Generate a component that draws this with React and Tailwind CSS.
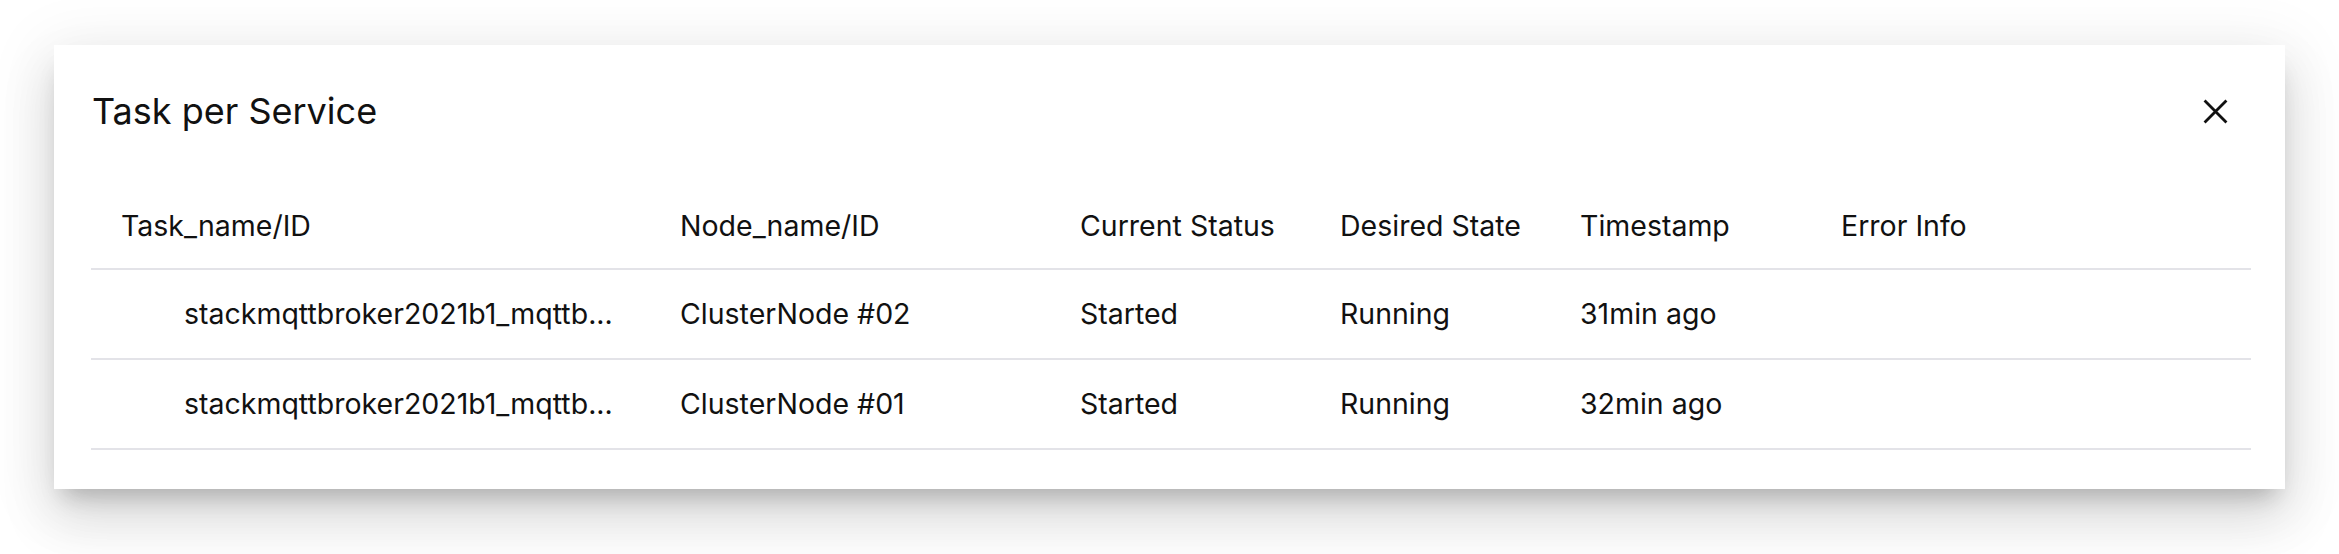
import React from "react";

const rows = [
  { task: "stackmqttbroker2021b1_mqttb...", node: "ClusterNode #02", status: "Started", desired: "Running", time: "31min ago", error: "" },
  { task: "stackmqttbroker2021b1_mqttb...", node: "ClusterNode #01", status: "Started", desired: "Running", time: "32min ago", error: "" },
];

const cols = "grid grid-cols-[559px_400px_260px_240px_261px_1fr]";

export default function App() {
  return (
    <div className="min-h-[554px] w-[2339px] bg-white pt-[45px] pl-[54px] font-['Inter',sans-serif] text-[#111111]">
      <div className="w-[2231px] h-[444px] bg-white shadow-[0_16px_22px_-10px_rgba(0,0,0,0.22),0_30px_50px_4px_rgba(0,0,0,0.10),0_10px_60px_10px_rgba(0,0,0,0.07)] pt-[36px] pl-[37px] pr-[34px]">
        <div className="flex items-center justify-between h-[60px]">
          <h2 className="pl-[1px] text-[36px] leading-none font-normal">Task per Service</h2>
          <button className="mr-[16px] flex items-center justify-center w-[40px] h-[40px]">
            <svg width="25" height="25" viewBox="0 0 24 24" fill="none" stroke="#111111" strokeWidth="2.7" strokeLinecap="butt">
              <path d="M1.5 1.5 L22.5 22.5 M22.5 1.5 L1.5 22.5" />
            </svg>
          </button>
        </div>
        <div className="mt-[39px] text-[28.5px] leading-none">
          <div className={`${cols} h-[90px] items-center pt-[5px] border-b-2 border-[#e3e3e8]`}>
            <div className="pl-[30px]">Task_name/ID</div>
            <div className="pl-[30px]">Node_name/ID</div>
            <div className="pl-[30px]">Current Status</div>
            <div className="pl-[30px]">Desired State</div>
            <div className="pl-[30px]">Timestamp</div>
            <div className="pl-[30px]">Error Info</div>
          </div>
          {rows.map((r, i) => (
            <div key={i} className={`${cols} h-[90px] items-center border-b-2 border-[#e3e3e8]`}>
              <div className="pl-[93px] whitespace-nowrap">{r.task}</div>
              <div className="pl-[30px] whitespace-nowrap">{r.node}</div>
              <div className="pl-[30px]">{r.status}</div>
              <div className="pl-[30px]">{r.desired}</div>
              <div className="pl-[30px] whitespace-nowrap">{r.time}</div>
              <div className="pl-[30px]">{r.error}</div>
            </div>
          ))}
        </div>
      </div>
    </div>
  );
}
